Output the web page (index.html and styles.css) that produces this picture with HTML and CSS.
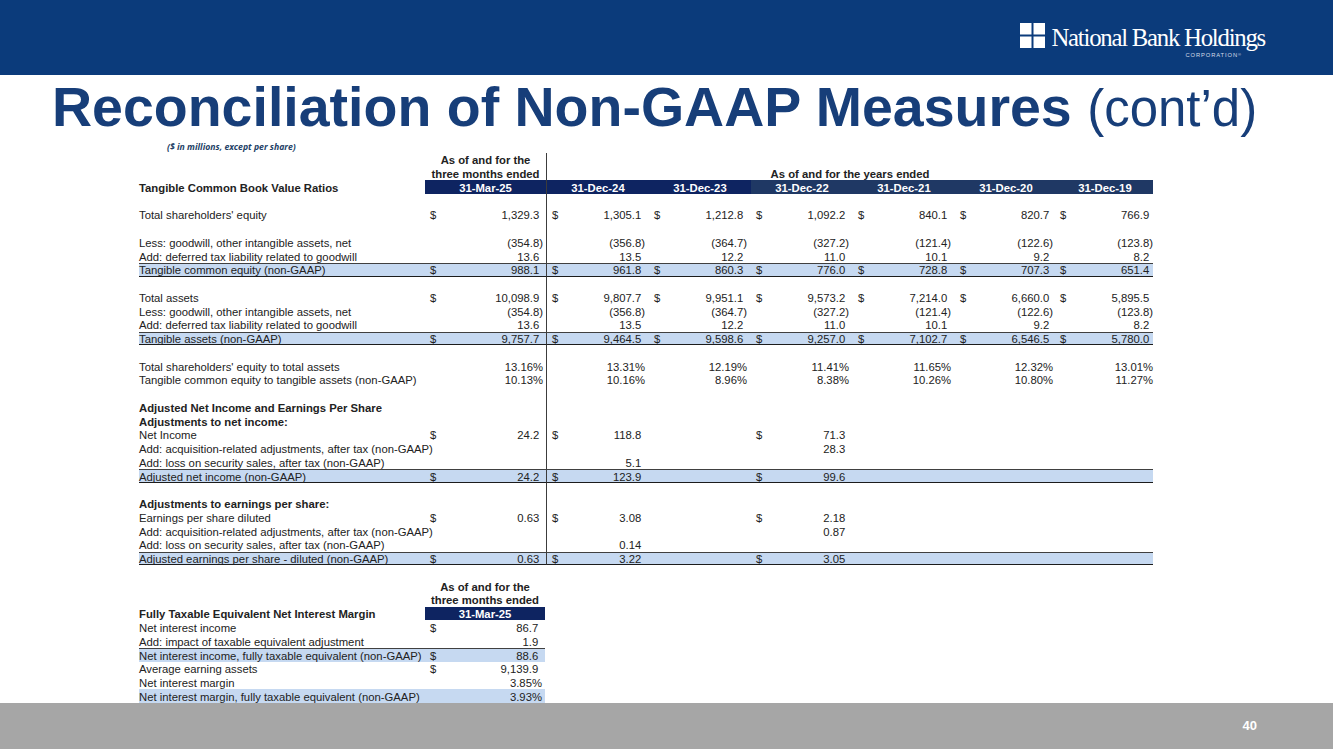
FILE: index.html
```html
<!DOCTYPE html>
<html lang="en">
<head>
<meta charset="utf-8">
<title>Reconciliation of Non-GAAP Measures (cont'd)</title>
<link rel="stylesheet" href="styles.css">
</head>
<body>
<header class="topbar">
  <div class="logo">
    <svg class="mark" width="25" height="25" viewBox="0 0 25 25" aria-hidden="true">
      <rect x="0" y="0" width="11.5" height="11.5" fill="#fff"/>
      <rect x="13.5" y="0" width="11.5" height="11.5" fill="#fff"/>
      <rect x="0" y="13.5" width="11.5" height="11.5" fill="#fff"/>
      <rect x="13.5" y="13.5" width="11.5" height="11.5" fill="#fff"/>
    </svg>
    <div class="logotext">
      <div class="name">National Bank Holdings</div>
      <div class="corp">CORPORATION<sup>®</sup></div>
    </div>
  </div>
</header>

<h1 class="title">Reconciliation of Non-GAAP Measures <span class="cont">(cont’d)</span></h1>

<main class="sheet">
  <div class="row"><div class="sub">($ in millions, except per share)</div></div>
  <div class="row sep"><div></div><div class="ctr">As of and for the</div></div>
  <div class="row sep"><div></div><div class="ctr">three months ended</div><div class="ctr span">As of and for the years ended</div></div>
  <div class="row sep hdr"><div class="bold">Tangible Common Book Value Ratios</div><div>31-Mar-25</div><div>31-Dec-24</div><div>31-Dec-23</div><div class="lt">31-Dec-22</div><div class="lt">31-Dec-21</div><div class="lt">31-Dec-20</div><div class="lt">31-Dec-19</div></div>
  <div class="row sep"><div></div><div></div></div>
  <div class="row sep"><div>Total shareholders' equity</div><div class="n"><span>$</span><span class="v">1,329.3</span></div><div class="n"><span>$</span><span class="v">1,305.1</span></div><div class="n"><span>$</span><span class="v">1,212.8</span></div><div class="n"><span>$</span><span class="v">1,092.2</span></div><div class="n"><span>$</span><span class="v">840.1</span></div><div class="n"><span>$</span><span class="v">820.7</span></div><div class="n"><span>$</span><span class="v">766.9</span></div></div>
  <div class="row sep"><div></div><div></div></div>
  <div class="row sep"><div>Less: goodwill, other intangible assets, net</div><div class="n"><span class="v x">(354.8)</span></div><div class="n"><span class="v x">(356.8)</span></div><div class="n"><span class="v x">(364.7)</span></div><div class="n"><span class="v x">(327.2)</span></div><div class="n"><span class="v x">(121.4)</span></div><div class="n"><span class="v x">(122.6)</span></div><div class="n"><span class="v x">(123.8)</span></div></div>
  <div class="row sep"><div>Add: deferred tax liability related to goodwill</div><div class="n"><span class="v">13.6</span></div><div class="n"><span class="v">13.5</span></div><div class="n"><span class="v">12.2</span></div><div class="n"><span class="v">11.0</span></div><div class="n"><span class="v">10.1</span></div><div class="n"><span class="v">9.2</span></div><div class="n"><span class="v">8.2</span></div></div>
  <div class="row sep hl"><div>Tangible common equity (non-GAAP)</div><div class="n"><span>$</span><span class="v">988.1</span></div><div class="n"><span>$</span><span class="v">961.8</span></div><div class="n"><span>$</span><span class="v">860.3</span></div><div class="n"><span>$</span><span class="v">776.0</span></div><div class="n"><span>$</span><span class="v">728.8</span></div><div class="n"><span>$</span><span class="v">707.3</span></div><div class="n"><span>$</span><span class="v">651.4</span></div></div>
  <div class="row sep"><div></div><div></div></div>
  <div class="row sep"><div>Total assets</div><div class="n"><span>$</span><span class="v">10,098.9</span></div><div class="n"><span>$</span><span class="v">9,807.7</span></div><div class="n"><span>$</span><span class="v">9,951.1</span></div><div class="n"><span>$</span><span class="v">9,573.2</span></div><div class="n"><span>$</span><span class="v">7,214.0</span></div><div class="n"><span>$</span><span class="v">6,660.0</span></div><div class="n"><span>$</span><span class="v">5,895.5</span></div></div>
  <div class="row sep"><div>Less: goodwill, other intangible assets, net</div><div class="n"><span class="v x">(354.8)</span></div><div class="n"><span class="v x">(356.8)</span></div><div class="n"><span class="v x">(364.7)</span></div><div class="n"><span class="v x">(327.2)</span></div><div class="n"><span class="v x">(121.4)</span></div><div class="n"><span class="v x">(122.6)</span></div><div class="n"><span class="v x">(123.8)</span></div></div>
  <div class="row sep"><div>Add: deferred tax liability related to goodwill</div><div class="n"><span class="v">13.6</span></div><div class="n"><span class="v">13.5</span></div><div class="n"><span class="v">12.2</span></div><div class="n"><span class="v">11.0</span></div><div class="n"><span class="v">10.1</span></div><div class="n"><span class="v">9.2</span></div><div class="n"><span class="v">8.2</span></div></div>
  <div class="row sep hl"><div>Tangible assets (non-GAAP)</div><div class="n"><span>$</span><span class="v">9,757.7</span></div><div class="n"><span>$</span><span class="v">9,464.5</span></div><div class="n"><span>$</span><span class="v">9,598.6</span></div><div class="n"><span>$</span><span class="v">9,257.0</span></div><div class="n"><span>$</span><span class="v">7,102.7</span></div><div class="n"><span>$</span><span class="v">6,546.5</span></div><div class="n"><span>$</span><span class="v">5,780.0</span></div></div>
  <div class="row sep"><div></div><div></div></div>
  <div class="row sep"><div>Total shareholders' equity to total assets</div><div class="n"><span class="v x">13.16%</span></div><div class="n"><span class="v x">13.31%</span></div><div class="n"><span class="v x">12.19%</span></div><div class="n"><span class="v x">11.41%</span></div><div class="n"><span class="v x">11.65%</span></div><div class="n"><span class="v x">12.32%</span></div><div class="n"><span class="v x">13.01%</span></div></div>
  <div class="row sep"><div>Tangible common equity to tangible assets (non-GAAP)</div><div class="n"><span class="v x">10.13%</span></div><div class="n"><span class="v x">10.16%</span></div><div class="n"><span class="v x">8.96%</span></div><div class="n"><span class="v x">8.38%</span></div><div class="n"><span class="v x">10.26%</span></div><div class="n"><span class="v x">10.80%</span></div><div class="n"><span class="v x">11.27%</span></div></div>
  <div class="row sep"><div></div><div></div></div>
  <div class="row sep"><div class="bold">Adjusted Net Income and Earnings Per Share</div><div></div></div>
  <div class="row sep"><div class="bold">Adjustments to net income:</div><div></div></div>
  <div class="row sep"><div>Net Income</div><div class="n"><span>$</span><span class="v">24.2</span></div><div class="n"><span>$</span><span class="v">118.8</span></div><div></div><div class="n"><span>$</span><span class="v">71.3</span></div></div>
  <div class="row sep"><div>Add: acquisition-related adjustments, after tax (non-GAAP)</div><div></div><div></div><div></div><div class="n"><span class="v">28.3</span></div></div>
  <div class="row sep"><div>Add: loss on security sales, after tax (non-GAAP)</div><div></div><div class="n"><span class="v">5.1</span></div></div>
  <div class="row sep hl"><div>Adjusted net income (non-GAAP)</div><div class="n"><span>$</span><span class="v">24.2</span></div><div class="n"><span>$</span><span class="v">123.9</span></div><div></div><div class="n"><span>$</span><span class="v">99.6</span></div><div></div><div></div><div></div></div>
  <div class="row sep"><div></div><div></div></div>
  <div class="row sep"><div class="bold">Adjustments to earnings per share:</div><div></div></div>
  <div class="row sep"><div>Earnings per share diluted</div><div class="n"><span>$</span><span class="v">0.63</span></div><div class="n"><span>$</span><span class="v">3.08</span></div><div></div><div class="n"><span>$</span><span class="v">2.18</span></div></div>
  <div class="row sep"><div>Add: acquisition-related adjustments, after tax (non-GAAP)</div><div></div><div></div><div></div><div class="n"><span class="v">0.87</span></div></div>
  <div class="row sep"><div>Add: loss on security sales, after tax (non-GAAP)</div><div></div><div class="n"><span class="v">0.14</span></div></div>
  <div class="row sep hl"><div>Adjusted earnings per share - diluted (non-GAAP)</div><div class="n"><span>$</span><span class="v">0.63</span></div><div class="n"><span>$</span><span class="v">3.22</span></div><div></div><div class="n"><span>$</span><span class="v">3.05</span></div><div></div><div></div><div></div></div>
  <div class="row"></div>

  <div class="row small"><div></div><div class="ctr">As of and for the</div></div>
  <div class="row small"><div></div><div class="ctr">three months ended</div></div>
  <div class="row small hdr"><div class="bold">Fully Taxable Equivalent Net Interest Margin</div><div>31-Mar-25</div></div>
  <div class="row small"><div>Net interest income</div><div class="n"><span>$</span><span class="v">86.7</span></div></div>
  <div class="row small"><div>Add: impact of taxable equivalent adjustment</div><div class="n"><span class="v">1.9</span></div></div>
  <div class="row small hl top"><div>Net interest income, fully taxable equivalent (non-GAAP)</div><div class="n"><span>$</span><span class="v">88.6</span></div></div>
  <div class="row small"><div>Average earning assets</div><div class="n"><span>$</span><span class="v">9,139.9</span></div></div>
  <div class="row small"><div>Net interest margin</div><div class="n"><span class="v x">3.85%</span></div></div>
  <div class="row small hl flat"><div>Net interest margin, fully taxable equivalent (non-GAAP)</div><div class="n"><span class="v x">3.93%</span></div></div>
</main>

<footer class="foot">40</footer>
</body>
</html>
```

FILE: styles.css
```css
* {
  box-sizing: border-box;
  margin: 0;
  padding: 0;
}

html,
body {
  width: 1333px;
  height: 749px;
  overflow: hidden;
}

body {
  font-family: "Liberation Sans", Arial, sans-serif;
  background: #ffffff;
  color: #222222;
  display: flex;
  flex-direction: column;
}

/* ---------- top bar ---------- */
.topbar {
  height: 75px;
  flex: none;
  background: #0b3b7b;
  display: flex;
  justify-content: flex-end;
  padding: 23px 68px 0 0;
}

.logo {
  display: flex;
  align-items: flex-start;
}

.mark {
  display: block;
  margin-right: 6px;
}

.logotext {
  margin-top: 3px;
  display: flex;
  flex-direction: column;
  align-items: flex-end;
}

.name {
  font-family: "Liberation Serif", "Times New Roman", serif;
  font-size: 24.8px;
  line-height: 24px;
  letter-spacing: -1.25px;
  color: #ffffff;
  white-space: nowrap;
}

.corp {
  font-family: "Liberation Sans", Arial, sans-serif;
  font-size: 5.8px;
  line-height: 6px;
  letter-spacing: 0.9px;
  color: #d4dbe8;
  margin: 2px 24px 0 0;
}

.corp sup {
  font-size: 4px;
  vertical-align: top;
  letter-spacing: 0;
}

/* ---------- title ---------- */
.title {
  flex: none;
  height: 64px;
  padding: 2.7px 0 0 52px;
  font-family: "Liberation Sans", Arial, sans-serif;
  font-weight: bold;
  font-size: 55.5px;
  line-height: 58px;
  color: #173e79;
  white-space: nowrap;
}

.title .cont {
  font-weight: normal;
  font-size: 51px;
}

/* ---------- spreadsheet ---------- */
.sheet {
  flex: none;
  padding-left: 139px;
}

.row {
  display: grid;
  grid-template-columns: 286px 122px 102px 102px 102px 102px 102px 96px;
  height: 13.76px;
  font-size: 11.3px;
  color: #222222;
}

.row.small {
  grid-template-columns: 286px 120px;
}

.row > div {
  display: flex;
  align-items: center;
  white-space: nowrap;
  line-height: 1;
  height: 13.76px;
  padding-top: 3px;
}

.bold {
  font-weight: bold;
}

.sub {
  padding-left: 28px;
  font-family: "Open Sans", "Liberation Sans", sans-serif;
  font-style: italic;
  font-weight: bold;
  font-size: 8.7px;
  color: #243f66;
}

.ctr {
  justify-content: center;
  font-weight: bold;
}

.span {
  grid-column: 3 / 9;
}

/* number cells */
.row > .n {
  padding: 3px 4px 0 5px;
}

.row > .n:nth-child(2) {
  padding: 3px 3px 0 5px;
}

.row > .n:nth-child(8) {
  padding: 3px 0 0 3px;
}

.v {
  margin-left: auto;
}

.v::after {
  content: ")";
  visibility: hidden;
}

.v.x::after {
  content: none;
}

/* separator between quarter and years */
.row.sep > div:nth-child(2) {
  border-right: 1px solid #3c3c3c;
}

/* column header band */
.hdr > div:nth-child(n+2) {
  background: #0e2461;
  color: #ffffff;
  font-weight: bold;
  justify-content: center;
}

.hdr > div.lt {
  background: #1f3864;
}

/* highlighted totals */
.hl > div {
  background: #c6d9f1;
  border-top: 1px solid #404040;
  border-bottom: 1px solid #1c1c1c;
}

.hl.top > div {
  border-bottom: 0;
}

.hl.flat > div {
  border-top: 0;
  border-bottom: 0;
}

/* ---------- footer ---------- */
.foot {
  flex: 1;
  background: #a6a6a6;
  display: flex;
  justify-content: flex-end;
  align-items: center;
  padding-right: 76px;
  color: #ffffff;
  font-weight: bold;
  font-size: 13px;
}
```
